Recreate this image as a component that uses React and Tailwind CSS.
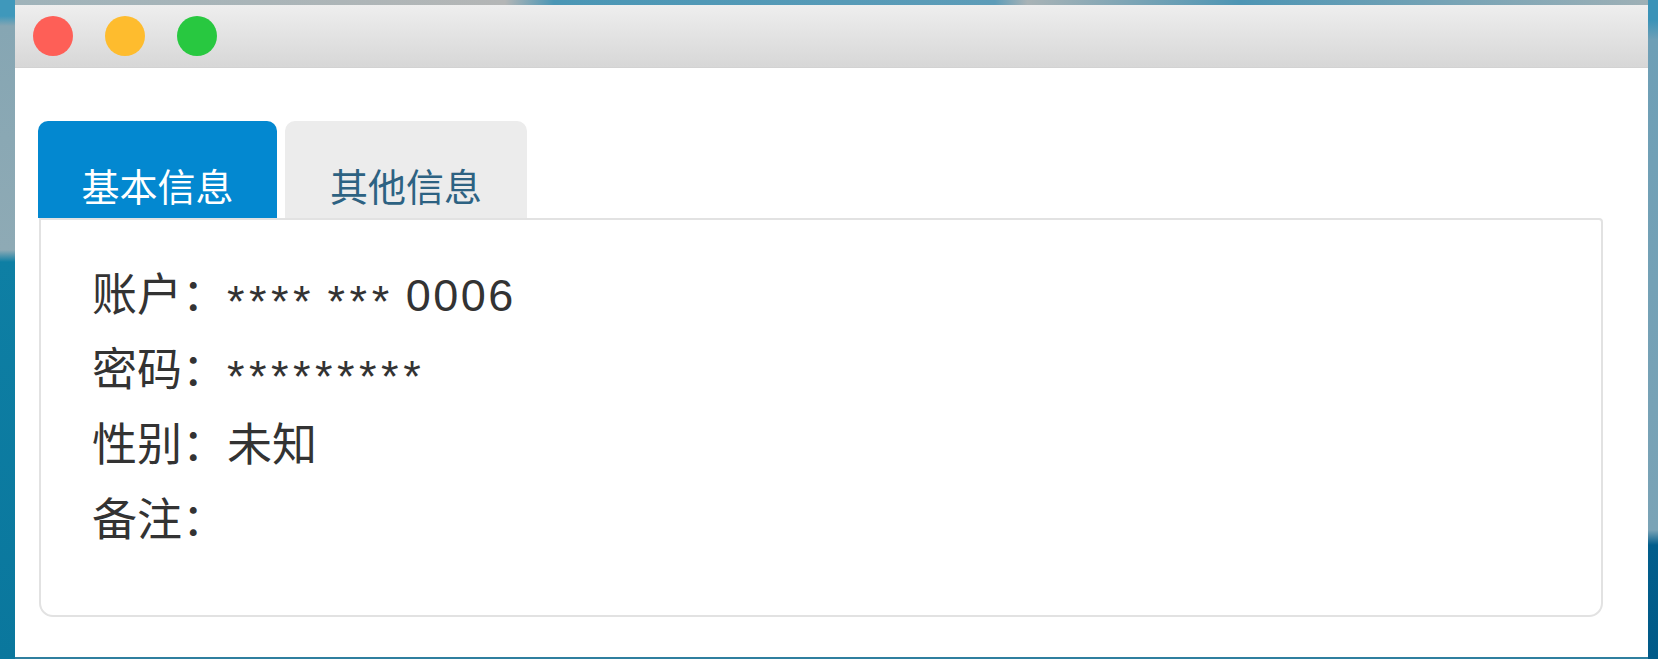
import React, { useState } from 'react';

const rows = [
    { label: '账户', value: [{ stars: '****' }, ' ', { stars: '***' }, { digits: '0006' }] },
    { label: '密码', value: [{ stars: '*********' }] },
    { label: '性别', value: ['未知'] },
    { label: '备注', value: [] },
];

const Part = ({ v }) => {
    if (typeof v === 'string') return v;
    if (v.stars) return <span className="tracking-[4.5px] leading-none align-[-6px]">{v.stars}</span>;
    return <span className="ml-[12px] tracking-[2.5px]">{v.digits}</span>;
};

const App = () => {
    const [tab, setTab] = useState(0);
    const tabs = ['基本信息', '其他信息'];

    return (
        <div className="flex h-[659px] w-[1658px] overflow-hidden font-['Liberation_Sans','Noto_Sans_CJK_SC',sans-serif]">
            {/* desktop, left */}
            <div className="w-[15px] bg-[linear-gradient(to_bottom,#3f98bb_0px,#3f98bb_16px,#86a6b3_26px,#8eaab5_250px,#0e7fa4_262px,#0a779d_100%)]" />

            <div className="flex flex-1 flex-col">
                {/* desktop, top */}
                <div className="h-[5px] bg-[linear-gradient(to_right,#9fb3ba,#b4b6b6_30%,#4a96b5_33%,#5d9cb8_60%,#a9b3b6_62%,#4d95b4_75%,#9eb0b6_100%)]" />

                {/* window */}
                <div className="flex flex-1 flex-col bg-white">
                    <div className="flex h-[63px] items-center gap-[32px] border-b border-[#d2d2d2] bg-[linear-gradient(to_bottom,#eeeeee,#d7d7d7)] pl-[18px]">
                        <span className="h-[40px] w-[40px] rounded-full bg-[#fe5f57]" />
                        <span className="h-[40px] w-[40px] rounded-full bg-[#febc2e]" />
                        <span className="h-[40px] w-[40px] rounded-full bg-[#28c840]" />
                    </div>

                    <div className="flex flex-1 flex-col pl-[23px] pr-[45px] pt-[53px]">
                        {/* tabs */}
                        <div className="flex gap-[8px]">
                            {tabs.map((t, i) => (
                                <button
                                    key={t}
                                    onClick={() => setTab(i)}
                                    className={`h-[97px] rounded-t-[10px] pt-[36px] text-[38px] leading-[46px] ${
                                        i === tab
                                            ? 'w-[239px] bg-[#0388d0] text-white'
                                            : 'w-[242px] bg-[#ececec] text-[#2d6282]'
                                    }`}
                                >
                                    {t}
                                </button>
                            ))}
                        </div>

                        {/* panel */}
                        <div className="ml-px h-[399px] rounded-tr-[4px] rounded-b-[14px] border-2 border-[#e2e2e2] pl-[51px] pt-[38px] text-[45px] leading-[75px] text-[#333333]">
                            {tab === 0 &&
                                rows.map((r) => (
                                    <div key={r.label} className="whitespace-pre">
                                        {r.label}：
                                        {r.value.map((v, i) => (
                                            <Part key={i} v={v} />
                                        ))}
                                    </div>
                                ))}
                        </div>
                    </div>
                </div>

                {/* desktop, bottom */}
                <div className="h-[2px] bg-[#2f7f9f]" />
            </div>

            {/* desktop, right */}
            <div className="w-[10px] bg-[linear-gradient(to_bottom,#3b93b8_0px,#3b93b8_20px,#6e9fb6_40px,#7aa3b6_530px,#025e8c_545px,#015a88_100%)]" />
        </div>
    );
};

export default App;
